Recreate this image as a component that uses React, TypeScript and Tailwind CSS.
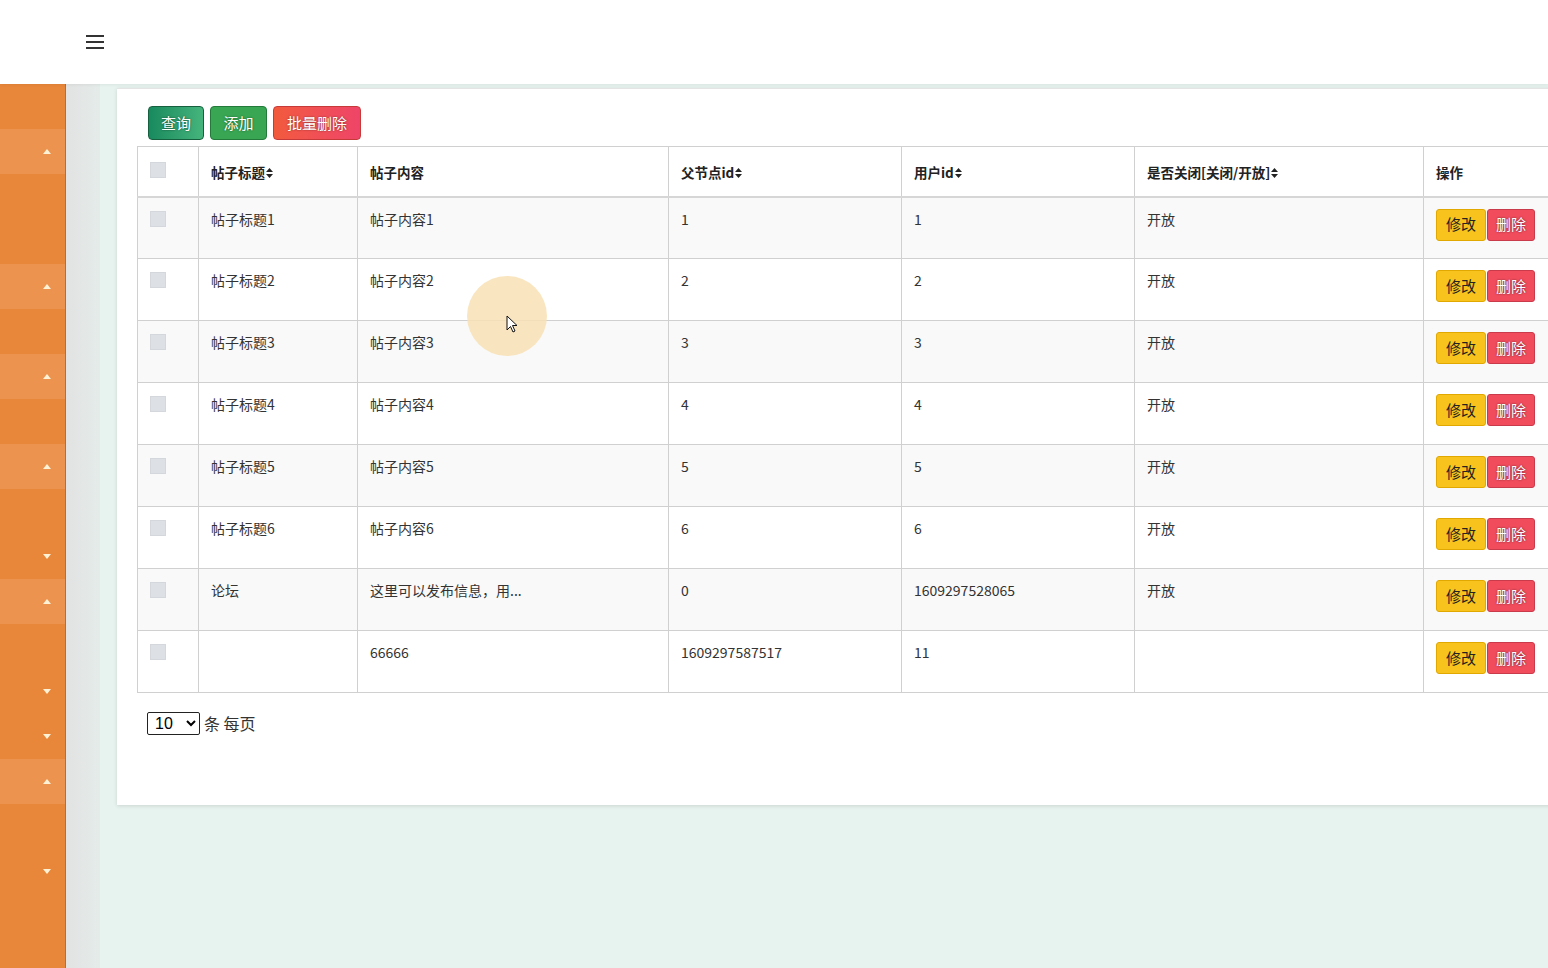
const FONT = { fontFamily: '"Noto Sans CJK SC", "Liberation Sans", sans-serif' };

type SideRow = "dark" | "up" | "down";
const sideRows: SideRow[] = [
  "dark", "up", "dark", "dark", "up", "dark", "up", "dark", "up", "dark",
  "down", "up", "dark", "down", "down", "up", "dark", "down",
];

const rows = [
  { title: "帖子标题1", content: "帖子内容1", parent: "1", user: "1", closed: "开放" },
  { title: "帖子标题2", content: "帖子内容2", parent: "2", user: "2", closed: "开放" },
  { title: "帖子标题3", content: "帖子内容3", parent: "3", user: "3", closed: "开放" },
  { title: "帖子标题4", content: "帖子内容4", parent: "4", user: "4", closed: "开放" },
  { title: "帖子标题5", content: "帖子内容5", parent: "5", user: "5", closed: "开放" },
  { title: "帖子标题6", content: "帖子内容6", parent: "6", user: "6", closed: "开放" },
  { title: "论坛", content: "这里可以发布信息，用...", parent: "0", user: "1609297528065", closed: "开放" },
  { title: "", content: "66666", parent: "1609297587517", user: "11", closed: "" },
];

function SortIcon() {
  return (
    <svg width="7" height="10" viewBox="0 0 7 10" className="inline-block ml-[1px] -mt-[2px]">
      <path d="M3.5 0 L7 4 H0 Z" fill="#222" />
      <path d="M3.5 10 L7 6 H0 Z" fill="#222" />
    </svg>
  );
}

function Caret({ up }: { up: boolean }) {
  return (
    <svg width="8" height="5" viewBox="0 0 8 5">
      {up ? <path d="M4 0 L8 5 H0 Z" fill="#fdf1d6" /> : <path d="M4 5 L8 0 H0 Z" fill="#fdf1d6" />}
    </svg>
  );
}

function Sidebar() {
  return (
    <div className="w-[66px] shrink-0 bg-[#e8873a] border-r border-[#c4692a] flex flex-col">
      {sideRows.map((r, i) => (
        <div
          key={i}
          className={`h-[45px] shrink-0 flex items-center justify-end pr-[14px] ${r === "up" ? "bg-[#ec944f]" : "bg-[#e8873a]"}`}
        >
          {r !== "dark" && <Caret up={r === "up"} />}
        </div>
      ))}
    </div>
  );
}

const th = "border border-[#d0d0d0] border-b-2 border-b-[#d6d6d6] text-left align-top px-[12px] pt-[15px] font-bold text-[13.5px] text-[#222]";
const td = "border border-[#d0d0d0] align-top px-[12px] pt-[11px] text-[14px] text-[#333]";

export default function App() {
  return (
    <div className="w-[1548px] h-[968px] overflow-hidden flex flex-col bg-[#e7f3ee] relative" style={FONT}>
      <header className="h-[84px] shrink-0 bg-white flex items-center pl-[86px] shadow-[0_1px_3px_rgba(0,0,0,0.06)] z-10">
        <div className="flex flex-col gap-[4px]">
          <span className="block w-[18px] h-[2px] bg-[#333]" />
          <span className="block w-[18px] h-[2px] bg-[#333]" />
          <span className="block w-[18px] h-[2px] bg-[#333]" />
        </div>
      </header>
      <div className="flex flex-1 min-h-0">
        <Sidebar />
        <div className="w-[34px] shrink-0 bg-gradient-to-r from-[#e2e2e2] to-[#e4ecea]" />
        <main className="flex-1 min-w-0 overflow-hidden pl-[17px] pt-[4px]">
          <div className="w-[1480px] h-[717px] bg-white shadow-[0_1px_4px_rgba(0,0,0,0.12)] border-t border-[#e4e4e4] pl-[20px] pt-[17px]">
            <div className="flex gap-[6px] pl-[11px] mb-[6px]">
              <button className="h-[34px] w-[56px] rounded-[4px] border border-[#16603f] bg-gradient-to-r from-[#178a5e] to-[#45b47c] text-white text-[15px] [text-shadow:0_0_2px_rgba(0,0,0,0.6)]">查询</button>
              <button className="h-[34px] w-[57px] rounded-[4px] border border-[#237a3a] bg-[#38a653] text-white text-[15px] [text-shadow:0_0_2px_rgba(0,0,0,0.5)]">添加</button>
              <button className="h-[34px] w-[88px] rounded-[4px] border border-[#c73a3a] bg-gradient-to-r from-[#f25a3c] to-[#ef4468] text-white text-[15px] [text-shadow:0_0_2px_rgba(0,0,0,0.5)]">批量删除</button>
            </div>
            <table className="border-collapse table-fixed w-[1446px]">
              <colgroup>
                <col className="w-[61px]" />
                <col className="w-[159px]" />
                <col className="w-[311px]" />
                <col className="w-[233px]" />
                <col className="w-[233px]" />
                <col className="w-[289px]" />
                <col className="w-[160px]" />
              </colgroup>
              <thead>
                <tr className="h-[50px]">
                  <th className={`${th} pt-[13px]`}>
                    <span className="block w-[16px] h-[16px] bg-[#dde0e4] border border-[#d4d7db]" />
                  </th>
                  <th className={th}>帖子标题<SortIcon /></th>
                  <th className={th}>帖子内容</th>
                  <th className={th}>父节点id<SortIcon /></th>
                  <th className={th}>用户id<SortIcon /></th>
                  <th className={th}>是否关闭[关闭/开放]<SortIcon /></th>
                  <th className={th}>操作</th>
                </tr>
              </thead>
              <tbody>
                {rows.map((r, i) => (
                  <tr key={i} className={`h-[62px] ${i % 2 === 0 ? "bg-[#f9f9f9]" : "bg-white"}`}>
                    <td className={`${td} pt-[13px]`}>
                      <span className="block w-[16px] h-[16px] bg-[#dde0e4] border border-[#d4d7db]" />
                    </td>
                    <td className={td}>{r.title}</td>
                    <td className={td}>{r.content}</td>
                    <td className={td}>{r.parent}</td>
                    <td className={td}>{r.user}</td>
                    <td className={td}>{r.closed}</td>
                    <td className={`${td} pt-[11px]`}>
                      <div className="flex gap-[1px]">
                        <button className="h-[32px] w-[50px] rounded-[3px] border border-[#e0a800] bg-[#f7c31c] text-[#222] text-[15px]">修改</button>
                        <button className="h-[32px] w-[48px] rounded-[3px] border border-[#c93a4a] bg-[#f04c5c] text-white text-[15px] [text-shadow:0_0_2px_rgba(0,0,0,0.6)]">删除</button>
                      </div>
                    </td>
                  </tr>
                ))}
              </tbody>
            </table>
            <div className="flex items-center gap-[4px] mt-[18px] pl-[10px]">
              <select className="h-[23px] w-[53px] border border-[#222] rounded-[2px] text-[16px] leading-[20px] py-0 text-black bg-white pl-[3px]" defaultValue="10" style={{ ...FONT, fontFamily: '"Liberation Sans", sans-serif' }}>
                <option value="10">10</option>
              </select>
              <span className="text-[16px] text-[#333]">条 每页</span>
            </div>
          </div>
        </main>
      </div>
      <div className="absolute left-[467px] top-[276px] w-[80px] h-[80px] rounded-full bg-[#f8e1b4] opacity-85 pointer-events-none" />
      <svg className="absolute left-[506px] top-[315px]" width="12" height="18" viewBox="0 0 12 18">
        <path d="M1 1 L1 15 L4.5 11.5 L7 17 L9 16 L6.5 10.5 L11 10.5 Z" fill="#fff" stroke="#111" strokeWidth="1" />
      </svg>
    </div>
  );
}
